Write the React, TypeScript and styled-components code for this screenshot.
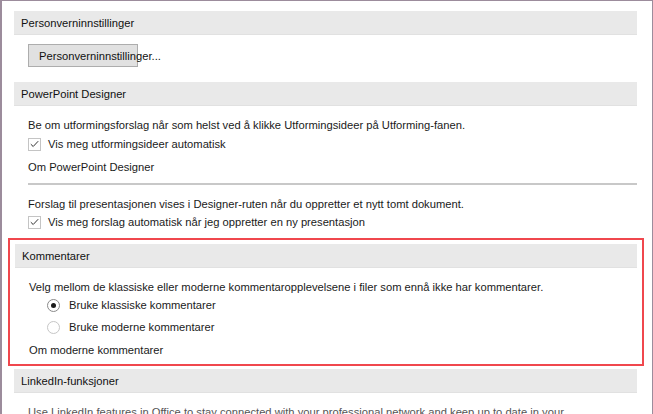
import React from 'react';
import styled, { createGlobalStyle } from 'styled-components';

const GlobalStyle = createGlobalStyle`
  html, body {
    margin: 0;
    padding: 0;
    background: #ffffff;
  }
  body {
    font-family: "Liberation Sans", Arial, sans-serif;
    font-size: 11.2px;
    color: #1a1a1a;
  }
`;

const Window = styled.div`
  box-sizing: border-box;
  width: 653px;
  height: 414px;
  border: 1px solid #9c8c9c;
  border-left-width: 2px;
  border-bottom: none;
  overflow: hidden;
  background: #ffffff;
`;

const Content = styled.div`
  padding: 10px 15px 0 12px;
  display: flex;
  flex-direction: column;
`;

const SectionHeader = styled.div<{ top?: number }>`
  height: 23px;
  display: flex;
  align-items: center;
  padding-left: 7px;
  margin-top: ${(p) => p.top ?? 0}px;
  background: #e9e9e9;
  border-bottom: 1px solid #e1e1e1;
  color: #111;
`;

const Section = styled.div<{ gap?: number }>`
  display: flex;
  flex-direction: column;
  padding: 0 0 0 14px;
  margin-bottom: ${(p) => p.gap ?? 0}px;
`;

const Line = styled.div<{ top?: number }>`
  height: 18px;
  line-height: 18px;
  margin-top: ${(p) => p.top ?? 0}px;
  white-space: nowrap;
`;

const Button = styled.button`
  box-sizing: border-box;
  width: 110px;
  height: 23px;
  margin: 9px 0 0 0;
  padding: 0 0 0 10px;
  background: #e1e1e1;
  border: 1px solid #adadad;
  font-family: inherit;
  font-size: inherit;
  color: #111;
  text-align: left;
  white-space: nowrap;
  overflow: visible;
`;

const OptionRow = styled.label<{ top?: number; indent?: number }>`
  display: flex;
  align-items: center;
  height: 18px;
  margin-top: ${(p) => p.top ?? 0}px;
  margin-left: ${(p) => p.indent ?? 0}px;
  white-space: nowrap;
`;

const Box = styled.span`
  box-sizing: border-box;
  width: 13px;
  height: 13px;
  border: 1px solid #c4c4c4;
  background: #fff;
  margin-right: 7px;
  display: flex;
  align-items: center;
  justify-content: center;
`;

const Radio = styled.span<{ checked?: boolean }>`
  box-sizing: border-box;
  width: 13px;
  height: 13px;
  border-radius: 50%;
  border: 1px solid ${(p) => (p.checked ? '#8a8a8a' : '#c6c6c6')};
  background: #fff;
  margin-right: 9px;
  display: flex;
  align-items: center;
  justify-content: center;
  &::after {
    content: '';
    width: 5px;
    height: 5px;
    border-radius: 50%;
    background: ${(p) => (p.checked ? '#1a1a1a' : 'transparent')};
  }
`;

const Separator = styled.div`
  height: 2px;
  background: #c8c8c8;
  margin-top: 7px;
`;

const Highlight = styled.div`
  margin: 7px -7px 0 -6px;
  padding: 4px 5px 5px 5px;
  border: 2px solid #f0474d;
`;

const Muted = styled(Line)`
  color: #555;
`;

const Check = () => (
  <svg width="9" height="8" viewBox="0 0 9 8">
    <path d="M0.8 4.2 L3.2 6.5 L8.2 1.2" fill="none" stroke="#333" strokeWidth="1" />
  </svg>
);

export default function App() {
  return (
    <>
      <GlobalStyle />
      <Window>
        <Content>
          <SectionHeader>Personverninnstillinger</SectionHeader>
          <Section gap={15}>
            <Button>Personverninnstillinger...</Button>
          </Section>

          <SectionHeader>PowerPoint Designer</SectionHeader>
          <Section>
            <Line top={10}>
              Be om utformingsforslag når som helst ved å klikke Utformingsideer på Utforming-fanen.
            </Line>
            <OptionRow top={1}>
              <Box><Check /></Box>
              Vis meg utformingsideer automatisk
            </OptionRow>
            <Line top={5}>Om PowerPoint Designer</Line>
          </Section>
          <Section>
            <Separator />
            <Line top={10}>
              Forslag til presentasjonen vises i Designer-ruten når du oppretter et nytt tomt dokument.
            </Line>
            <OptionRow>
              <Box><Check /></Box>
              Vis meg forslag automatisk når jeg oppretter en ny presentasjon
            </OptionRow>
          </Section>

          <Highlight>
            <SectionHeader>Kommentarer</SectionHeader>
            <Section>
              <Line top={10}>
                Velg mellom de klassiske eller moderne kommentaropplevelsene i filer som ennå ikke har kommentarer.
              </Line>
              <OptionRow indent={18}>
                <Radio checked />
                Bruke klassiske kommentarer
              </OptionRow>
              <OptionRow indent={18} top={4}>
                <Radio />
                Bruke moderne kommentarer
              </OptionRow>
              <Line top={5}>Om moderne kommentarer</Line>
            </Section>
          </Highlight>

          <SectionHeader top={3}>LinkedIn-funksjoner</SectionHeader>
          <Section>
            <Muted top={10}>
              Use LinkedIn features in Office to stay connected with your professional network and keep up to date in your
            </Muted>
          </Section>
        </Content>
      </Window>
    </>
  );
}
